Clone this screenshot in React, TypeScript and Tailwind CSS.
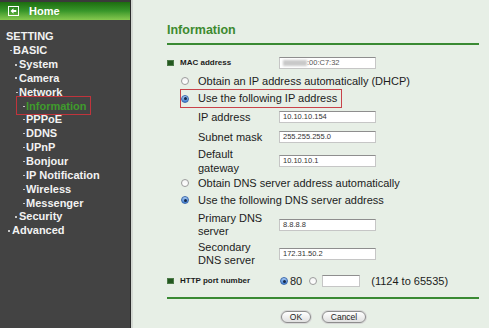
import React from "react";

const FONT = { fontFamily: '"Liberation Sans", Arial, Helvetica, sans-serif' };

function Radio({ on }: { on?: boolean }) {
  return on ? (
    <span className="inline-flex items-center justify-center w-[8px] h-[8px] rounded-full border border-[#3b68ad] bg-linear-to-b from-[#a9cbf2] to-[#3f7fd3] shrink-0">
      <span className="w-[3px] h-[3px] rounded-full bg-[#15284a]" />
    </span>
  ) : (
    <span className="inline-block w-[8px] h-[8px] rounded-full border border-[#9c9c9c] bg-linear-to-b from-[#f4f4f4] to-white shrink-0" />
  );
}

function Field({ children, w = "w-[97px]" }: { children?: React.ReactNode; w?: string }) {
  return (
    <div
      className={`h-[12px] ${w} bg-white border border-[#c6c6c6] border-t-[#8e8e8e] flex items-center pl-[3px] text-[7.5px] text-[#333] shrink-0`}
    >
      {children}
    </div>
  );
}

type Item = { t: string; pl: number; b?: "dash" | "dot"; gap?: number; active?: boolean };

const items: Item[] = [
  { t: "SETTING", pl: 6 },
  { t: "BASIC", pl: 10, b: "dash", gap: 1 },
  { t: "System", pl: 15, b: "dot", gap: 2 },
  { t: "Camera", pl: 15, b: "dot", gap: 2 },
  { t: "Network", pl: 16, b: "dash", gap: 1 },
  { t: "Information", pl: 23, b: "dash", gap: 1, active: true },
  { t: "PPPoE", pl: 23, b: "dash", gap: 1 },
  { t: "DDNS", pl: 23, b: "dash", gap: 1 },
  { t: "UPnP", pl: 23, b: "dash", gap: 1 },
  { t: "Bonjour", pl: 23, b: "dash", gap: 1 },
  { t: "IP Notification", pl: 23, b: "dash", gap: 1 },
  { t: "Wireless", pl: 23, b: "dash", gap: 1 },
  { t: "Messenger", pl: 23, b: "dash", gap: 1 },
  { t: "Security", pl: 15, b: "dot", gap: 2 },
  { t: "Advanced", pl: 8, b: "dot", gap: 2 },
];

function Sidebar() {
  return (
    <div className="w-[131px] shrink-0 bg-[#434343] border-r border-[#2b2b2b] flex flex-col">
      <div className="h-[2px] bg-[#3a3a3a]" />
      <div className="h-[18px] bg-linear-to-b from-[#1d6c10] via-[#38972a] to-[#86c94f] flex items-center pl-[8px]">
        <svg width="11" height="10" viewBox="0 0 11 10" className="shrink-0">
          <rect x="0.5" y="0.5" width="10" height="9" fill="none" stroke="white" strokeWidth="1" />
          <path d="M2.5 5 L5.5 2.2 V4 H8.3 V6 H5.5 V7.8 Z" fill="white" />
        </svg>
        <span className="ml-[10px] text-[11px] font-bold text-white leading-none">Home</span>
      </div>
      <div className="pt-[10px] flex flex-col">
        {items.map((it) => (
          <div
            key={it.t}
            className="relative h-[13.85px] flex items-center text-[11px] font-bold leading-none"
            style={{ paddingLeft: it.pl }}
          >
            {it.b === "dash" && <span className="w-[2px] h-[1px] bg-[#c8c8c8] shrink-0" />}
            {it.b === "dot" && <span className="w-[2px] h-[2px] bg-[#c8c8c8] shrink-0" />}
            <span
              className={it.active ? "text-[#3f9b2c]" : "text-[#f2f2f2]"}
              style={{ marginLeft: it.gap ?? 0 }}
            >
              {it.t}
            </span>
            {it.active && (
              <span className="absolute left-[16px] top-[-3px] w-[75px] h-[19px] border border-[#c0343c]" />
            )}
          </div>
        ))}
      </div>
    </div>
  );
}

function LabelRow({
  label,
  h = "h-[14px]",
  mt,
  lh = "leading-[14px]",
  children,
}: {
  label: React.ReactNode;
  h?: string;
  mt: string;
  lh?: string;
  children: React.ReactNode;
}) {
  return (
    <div className={`${mt} ${h} flex items-center`}>
      <div className={`w-[112px] pl-[31px] text-[11px] text-[#1c1c1c] ${lh} shrink-0`}>{label}</div>
      {children}
    </div>
  );
}

function Panel() {
  return (
    <div className="flex-1 bg-[#e7efe6] pl-[34px] pr-[10px] text-[#1c1c1c]">
      <div className="mt-[22px] h-[16px] leading-[16px] text-[12.5px] font-bold text-[#3d8a2f]">Information</div>
      <div className="mt-[5px] h-[2px] bg-[#3a8a33]" />

      <div className="mt-[11px] h-[14px] flex items-center">
        <span className="w-[7px] h-[6px] bg-[#23581f] border border-[#4c7a48] shrink-0" />
        <span className="ml-[6px] w-[99px] text-[8px] font-bold leading-none shrink-0">MAC address</span>
        <Field>
          <span className="w-[24px] h-[6px] bg-[#c9c9c9] blur-[1px] shrink-0" />
          <span className="text-[#555]">:00:C7:32</span>
        </Field>
      </div>

      <div className="mt-[3px] h-[16px] flex items-center pl-[14px]">
        <Radio />
        <span className="ml-[9px] text-[11px] leading-none">Obtain an IP address automatically (DHCP)</span>
      </div>
      <div className="ml-[13px] w-[162px] h-[19px] border border-[#c8434a] flex items-center">
        <Radio on />
        <span className="ml-[9px] text-[11px] leading-none">Use the following IP address</span>
      </div>

      <LabelRow label="IP address" mt="mt-[2px]">
        <Field>10.10.10.154</Field>
      </LabelRow>
      <LabelRow label="Subnet mask" mt="mt-[6px]">
        <Field>255.255.255.0</Field>
      </LabelRow>
      <LabelRow
        label={
          <>
            Default
            <br />
            gateway
          </>
        }
        mt="mt-[3px]"
        h="h-[28px]"
      >
        <Field>10.10.10.1</Field>
      </LabelRow>

      <div className="h-[16px] flex items-center pl-[14px]">
        <Radio />
        <span className="ml-[9px] text-[11px] leading-none">Obtain DNS server address automatically</span>
      </div>
      <div className="mt-[1px] h-[16px] flex items-center pl-[14px]">
        <Radio on />
        <span className="ml-[9px] text-[11px] leading-none">Use the following DNS server address</span>
      </div>

      <LabelRow
        label={
          <>
            Primary DNS
            <br />
            server
          </>
        }
        mt="mt-[4px]"
        h="h-[26px]"
        lh="leading-[13px]"
      >
        <Field>8.8.8.8</Field>
      </LabelRow>
      <LabelRow
        label={
          <>
            Secondary
            <br />
            DNS server
          </>
        }
        mt="mt-[3px]"
        h="h-[26px]"
        lh="leading-[13px]"
      >
        <Field>172.31.50.2</Field>
      </LabelRow>

      <div className="mt-[7px] h-[14px] flex items-center">
        <span className="w-[7px] h-[6px] bg-[#23581f] border border-[#4c7a48] shrink-0" />
        <span className="ml-[6px] w-[100px] text-[8px] font-bold leading-none shrink-0">HTTP port number</span>
        <Radio on />
        <span className="ml-[2px] text-[11px] leading-none">80</span>
        <span className="ml-[7px] flex">
          <Radio />
        </span>
        <span className="ml-[5px]">
          <Field w="w-[38px]" />
        </span>
        <span className="ml-[11px] text-[11px] leading-none">(1124 to 65535)</span>
      </div>

      <div className="mt-[9px] h-[2px] bg-[#3a8a33]" />

      <div className="mt-[12px] flex">
        <button className="ml-[114px] w-[30px] h-[12px] rounded-full border border-[#8d8d8d] bg-linear-to-b from-white to-[#e0e0e0] shadow-[0_0_0_1px_#d6d6d6] text-[8.5px] text-[#222] leading-none flex items-center justify-center">
          OK
        </button>
        <button className="ml-[11px] w-[44px] h-[12px] rounded-full border border-[#8d8d8d] bg-linear-to-b from-white to-[#e0e0e0] shadow-[0_0_0_1px_#d6d6d6] text-[8.5px] text-[#222] leading-none flex items-center justify-center">
          Cancel
        </button>
      </div>
    </div>
  );
}

export default function App() {
  return (
    <div className="w-[489px] h-[328px] flex overflow-hidden" style={FONT}>
      <Sidebar />
      <div className="w-[2px] bg-[#d3d8d2] shrink-0" />
      <Panel />
    </div>
  );
}
